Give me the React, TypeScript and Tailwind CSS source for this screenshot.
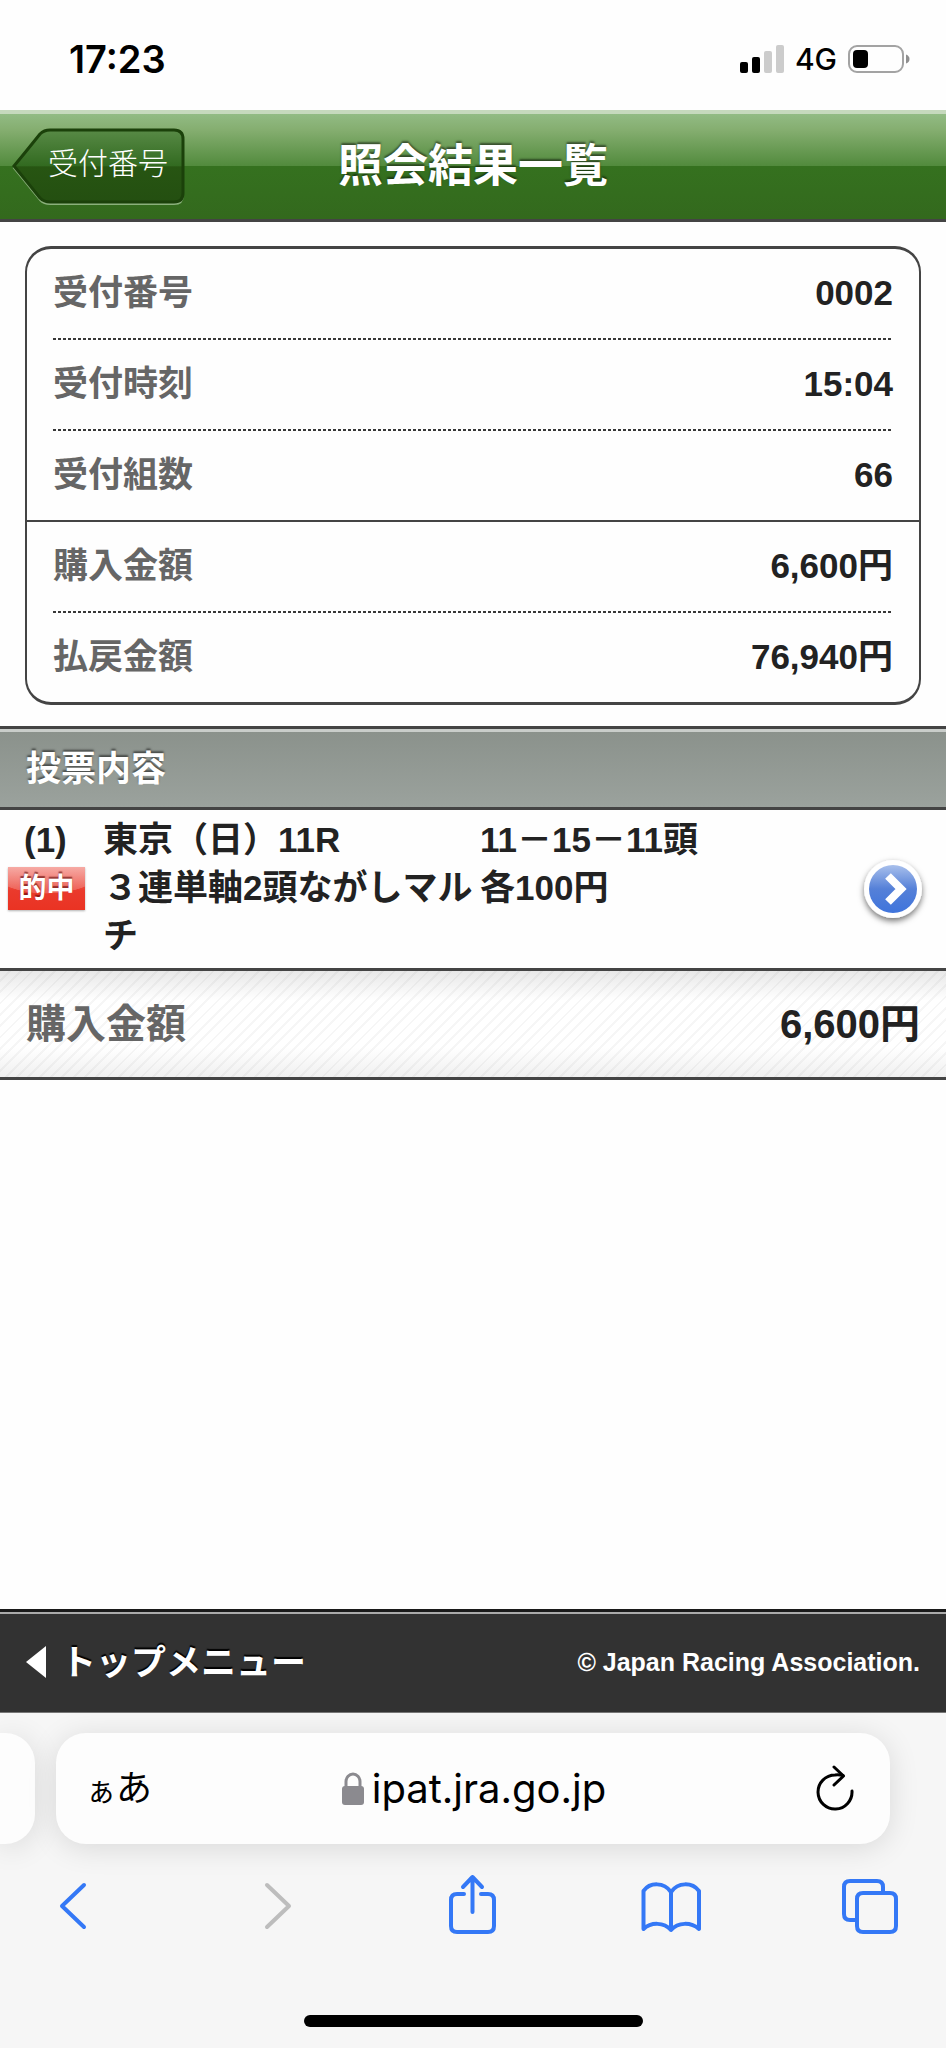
import React from 'react';

interface RowProps {
  label: string;
  value: string;
  divider?: 'dotted' | 'solid';
}

const SUMMARY: RowProps[] = [
  { label: '受付番号', value: '0002', divider: 'dotted' },
  { label: '受付時刻', value: '15:04', divider: 'dotted' },
  { label: '受付組数', value: '66', divider: 'solid' },
  { label: '購入金額', value: '6,600円', divider: 'dotted' },
  { label: '払戻金額', value: '76,940円' },
];

const StatusBar = () => (
  <div className="flex h-[110px] items-center justify-between bg-[#fefefe] pt-2 pr-9 pl-[69px] font-['Inter']">
    <span className="text-[38px] leading-none font-semibold text-black">17:23</span>
    <div className="flex items-center gap-[11px]">
      <svg width="44" height="28" viewBox="0 0 44 28" aria-hidden="true">
        <rect x="0" y="17" width="8" height="11" rx="2" fill="#000" />
        <rect x="12" y="12" width="8" height="16" rx="2" fill="#000" />
        <rect x="24" y="6" width="8" height="22" rx="2" fill="#ccc" />
        <rect x="36" y="0" width="8" height="28" rx="2" fill="#ccc" />
      </svg>
      <span className="text-[30px] leading-none font-medium text-black">4G</span>
      <svg width="62" height="28" viewBox="0 0 62 28" aria-hidden="true">
        <rect x="1" y="1" width="54" height="26" rx="8" fill="none" stroke="#a3a3a3" strokeWidth="2" />
        <rect x="5" y="5" width="15" height="18" rx="4" fill="#000" />
        <path d="M58 9.500c2.500 1 3.500 2.500 3.500 4.500s-1 3.500-3.500 4.500z" fill="#8f8f8f" />
      </svg>
    </div>
  </div>
);

const Header = () => (
  <header className="grid h-28 grid-cols-[1fr_auto_1fr] items-center border-t-4 border-b-3 border-t-[#c6d9bd] border-b-[#444] bg-[linear-gradient(#92bb84_0%,#85ae70_15%,#518a3c_50%,#35711f_50%,#33691d_100%)] px-3">
    <button type="button" className="relative h-[78px] w-[174px] pb-1.5 pl-[18px] text-[30px] leading-none font-light text-white">
      <svg className="absolute inset-0" width="174" height="78" viewBox="0 0 174 78" aria-hidden="true">
        <defs>
          <linearGradient id="backFill" x1="0" y1="0" x2="0" y2="1">
            <stop offset="0" stopColor="#588a46" />
            <stop offset="0.5" stopColor="#326a20" />
            <stop offset="0.51" stopColor="#275512" />
            <stop offset="1" stopColor="#244f11" />
          </linearGradient>
        </defs>
        <path d="M2 40C12 28 20 18 28 8Q32 4 38 4H162Q171 4 171 13V67Q171 76 162 76H38Q32 76 28 72C20 62 12 52 2 40Z" fill="none" stroke="#8bb07c" strokeWidth="2" />
        <path d="M2 38C12 26 20 16 28 6Q32 2 38 2H162Q171 2 171 11V65Q171 74 162 74H38Q32 74 28 70C20 60 12 50 2 38Z" fill="url(#backFill)" stroke="#1b410a" strokeWidth="3" />
      </svg>
      <span className="relative">受付番号</span>
    </button>
    <h1 className="text-[45px] leading-none font-bold text-white [text-shadow:0_-2px_2px_rgba(0,0,0,0.5)]">照会結果一覧</h1>
  </header>
);

const SummaryRow = ({ label, value, divider }: RowProps) => (
  <>
    <div className="flex h-[89px] items-center justify-between px-[26px] pb-0.5 text-[35px] leading-none font-bold">
      <dt className="text-[#666]">{label}</dt>
      <dd className="text-[#222]">{value}</dd>
    </div>
    {divider === 'dotted' && (
      <div className="mx-[26px] h-0.5 bg-[repeating-linear-gradient(90deg,#383838_0_3px,#fff_3px_5px)]" />
    )}
    {divider === 'solid' && <div className="h-0.5 bg-[#444]" />}
  </>
);

const BetRow = () => (
  <a href="#bet-1" className="flex items-stretch bg-[#fefefe] pt-1.5 pr-[23px] pb-2 text-[35px] leading-[48px] font-bold text-[#222]">
    <div className="flex w-[103px] shrink-0 flex-col gap-[3px] pl-2">
      <span className="pl-4">(1)</span>
      <span className="flex h-[43px] w-[77px] items-center justify-center bg-[radial-gradient(75%_62%_at_50%_0,rgba(255,255,255,0.2)_98%,transparent),linear-gradient(#f4958e_0%,#ea3a2c_55%,#ea3323_100%)] text-[28px] leading-none text-white shadow-[0_1px_2px_rgba(0,0,0,0.3)] [text-shadow:0_-2px_1px_rgba(90,0,0,0.6)]">
        的中
      </span>
    </div>
    <div className="w-[377px] shrink-0">
      東京（日）11R
      <br />
      ３連単軸2頭ながしマルチ
    </div>
    <div className="flex-1">
      11－15－11頭
      <br />
      各100円
    </div>
    <svg className="shrink-0 self-center" width="60" height="64" viewBox="0 0 60 64" overflow="visible" aria-hidden="true">
      <defs>
        <linearGradient id="goFill" x1="0" y1="0" x2="0" y2="1">
          <stop offset="0" stopColor="#a9c0ec" />
          <stop offset="0.5" stopColor="#5580d8" />
          <stop offset="1" stopColor="#3f74dc" />
        </linearGradient>
        <filter id="goShadow" x="-20%" y="-20%" width="140%" height="150%">
          <feDropShadow dx="0" dy="3" stdDeviation="3" floodOpacity="0.55" />
        </filter>
      </defs>
      <circle cx="30" cy="33" r="29" fill="#fff" filter="url(#goShadow)" />
      <circle cx="30" cy="33" r="24" fill="url(#goFill)" />
      <path d="M25 20l13 13-13 13" fill="none" stroke="#fff" strokeWidth="8" />
    </svg>
  </a>
);

const Footer = () => (
  <footer className="flex h-[104px] items-center justify-between border-t-3 border-b border-t-[#1a1a1a] border-b-[#777] bg-[#323232] px-[26px] font-bold text-white shadow-[inset_0_2px_0_#aaa]">
    <a href="#top" className="flex items-center gap-[15px] text-[35px] leading-none [text-shadow:0_-2px_1px_#000]">
      <svg width="20" height="32" viewBox="0 0 20 32" aria-hidden="true">
        <path d="M0 16L20 0v32z" fill="#fff" />
      </svg>
      トップメニュー
    </a>
    <small className="text-[25px] leading-none">© Japan Racing Association.</small>
  </footer>
);

const AddressBar = () => (
  <div className="flex gap-[21px] pt-5">
    <div className="h-[111px] w-[35px] rounded-r-[30px] bg-[#fdfdfd] shadow-[0_4px_30px_rgba(0,0,0,0.12)]" />
    <div className="mr-14 grid h-[111px] flex-1 grid-cols-[1fr_auto_1fr] items-center rounded-[30px] bg-[#fdfdfd] pr-7 pl-[30px] shadow-[0_4px_30px_rgba(0,0,0,0.12)]">
      <button type="button" aria-label="ページ設定" className="flex items-baseline justify-self-start text-black">
        <span className="text-[30px] leading-none">ぁ</span>
        <span className="text-[36px] leading-none">あ</span>
      </button>
      <div className="flex items-center gap-2">
        <svg width="22" height="33" viewBox="0 0 22 33" aria-hidden="true">
          <path d="M4 15V9.500a7 7.500 0 0 1 14 0V15" fill="none" stroke="#8b8a8f" strokeWidth="3" />
          <rect y="14" width="22" height="19" rx="3" fill="#8b8a8f" />
        </svg>
        <input
          aria-label="アドレス"
          readOnly
          defaultValue="ipat.jra.go.jp"
          className="field-sizing-content font-['Inter'] text-[40px] leading-none text-black outline-none"
        />
      </div>
      <button type="button" aria-label="再読み込み" className="justify-self-end">
        <svg width="50" height="48" viewBox="0 0 50 48" fill="none" stroke="#000" strokeWidth="3" strokeLinecap="round" strokeLinejoin="round" aria-hidden="true">
          <path d="M40 26a17 17 0 1 1-17-16q4-.5 8 .5" />
          <path d="M22 2l9.500 9-9.500 9" />
        </svg>
      </button>
    </div>
  </div>
);

const TOOLS = [
  { name: '戻る', color: '#3478f6', paths: ['M44 10L22 31l22 21'] },
  { name: '進む', color: '#bdbdbd', paths: ['M27 10l22 21-22 21'] },
  { name: '共有', color: '#3478f6', paths: ['M25 19h-7q-6 0-6 6v26q0 6 6 6h31q6 0 6-6V25q0-6-6-6h-7', 'M33.500 37V2M24 12L33.500 2l9.500 10'] },
  { name: 'ブックマーク', color: '#3478f6', paths: ['M32 17C25 7 11 7 4.500 16V54C12 47 25 47 32 55C39 47 52 47 60 54V16C53 7 39 7 32 17V55'] },
  { name: 'タブ', color: '#3478f6', paths: ['M19 45h-7q-6 0-6-6V12q0-6 6-6h27q6 0 6 6v6', 'M25 18h27q6 0 6 6v27q0 6-6 6H25q-6 0-6-6V24q0-6 6-6z'] },
];

const Toolbar = () => (
  <nav className="mt-[31px] flex justify-between pr-11 pl-10">
    {TOOLS.map(({ name, color, paths }) => (
      <button key={name} type="button" aria-label={name}>
        <svg width="64" height="64" viewBox="0 0 64 64" fill="none" stroke={color} strokeWidth="4" strokeLinecap="round" strokeLinejoin="round" overflow="visible" aria-hidden="true">
          {paths.map((d) => (
            <path key={d} d={d} />
          ))}
        </svg>
      </button>
    ))}
  </nav>
);

export default function App() {
  return (
    <div className="flex min-h-screen flex-col bg-[#fefefe] font-['Liberation_Sans','Noto_Sans_CJK_JP',sans-serif]">
      <StatusBar />
      <Header />

      <main className="flex-1">
        <dl className="mx-[25px] mt-6 mb-[21px] rounded-[26px] border-x-2 border-y-3 border-[#444]">
          {SUMMARY.map((row) => (
            <SummaryRow key={row.label} {...row} />
          ))}
        </dl>

        <h2 className="flex h-[84px] items-center border-t-3 border-b-3 border-[#444] bg-[linear-gradient(#8a918b,#9ba29d)] px-[26px] text-[35px] leading-none font-bold text-white shadow-[inset_0_3px_0_#c9cdca] [text-shadow:0_-2px_2px_rgba(0,0,0,0.5)]">
          投票内容
        </h2>
        <BetRow />

        {/* Total, on a pinstripe that darkens toward both edges */}
        <div className="flex h-28 items-center justify-between border-t-3 border-b-3 border-[#444] bg-[linear-gradient(rgba(0,0,0,0.09),transparent_28%,transparent_72%,rgba(0,0,0,0.06)),repeating-linear-gradient(135deg,#fff_0_6px,#f6f6f6_6px_8px)] px-[26px] text-[40px] leading-none font-bold">
          <span className="text-[#666]">購入金額</span>
          <span className="text-[#222]">6,600円</span>
        </div>
      </main>

      <Footer />
      <div className="bg-[#f6f6f6]">
        <AddressBar />
        <Toolbar />
        <div className="flex justify-center pt-[76px] pb-[21px]">
          <div className="h-3 w-[339px] rounded-full bg-black" />
        </div>
      </div>
    </div>
  );
}
